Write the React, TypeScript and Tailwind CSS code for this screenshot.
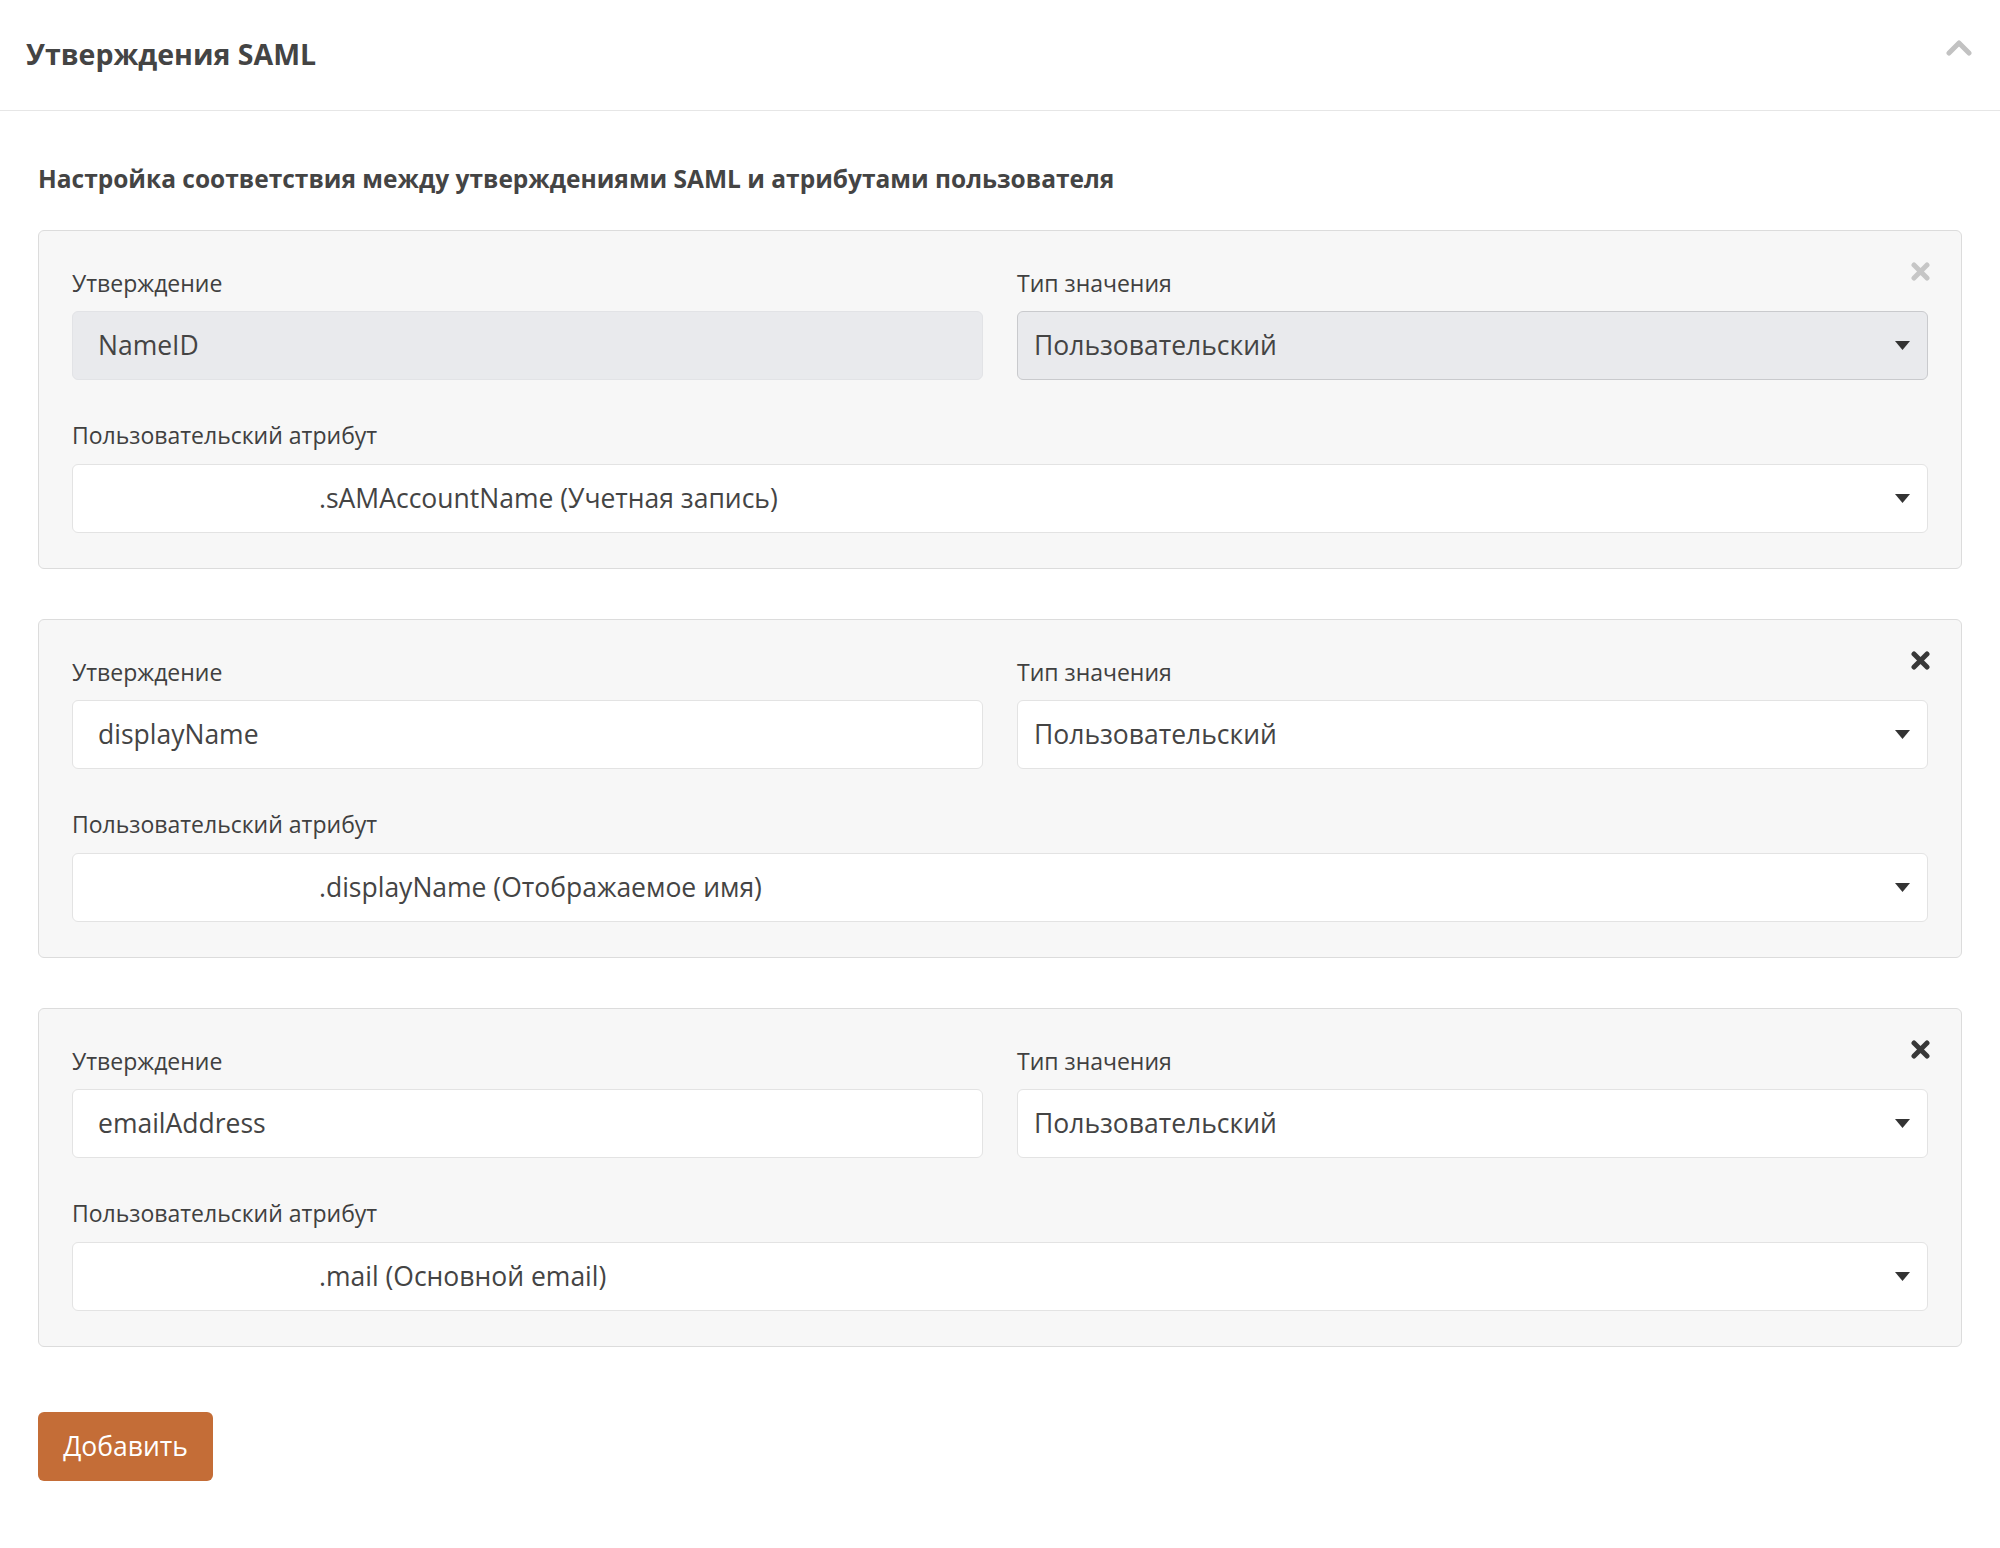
import React from "react";

const font = { fontFamily: '"Open Sans", "Noto Sans", sans-serif' };

function Caret() {
  return (
    <svg width="15" height="9" viewBox="0 0 15 9" className="shrink-0">
      <path d="M0 0 L15 0 L7.5 9 Z" fill="#333333" />
    </svg>
  );
}

function CloseIcon({ disabled }: { disabled: boolean }) {
  return (
    <svg width="19" height="19" viewBox="0 0 19 19">
      <path
        d="M3 3 L16 16 M16 3 L3 16"
        stroke={disabled ? "#c6c6c6" : "#383838"}
        strokeWidth="5"
        strokeLinecap="round"
      />
    </svg>
  );
}

type Row = {
  claim: string;
  attr: string;
  locked: boolean;
};

const rows: Row[] = [
  { claim: "NameID", attr: ".sAMAccountName (Учетная запись)", locked: true },
  { claim: "displayName", attr: ".displayName (Отображаемое имя)", locked: false },
  { claim: "emailAddress", attr: ".mail (Основной email)", locked: false },
];

function ClaimCard({ row }: { row: Row }) {
  return (
    <div className="relative rounded-[6px] border border-[#dcdcdc] bg-[#f7f7f7] px-[33px] pt-[38px] pb-[35px]">
      <div className="absolute right-[31px] top-[31px]">
        <CloseIcon disabled={row.locked} />
      </div>
      <div className="grid grid-cols-2 gap-x-[34px]">
        <div>
          <div className="h-[28px] text-[23px] leading-[28px] text-[#404040]">Утверждение</div>
          <div
            className={
              row.locked
                ? "mt-[14px] flex h-[69px] items-center rounded-[6px] border border-[#e2e3e6] bg-[#e9eaed] pl-[25px] text-[26.5px] text-[#444]"
                : "mt-[14px] flex h-[69px] items-center rounded-[6px] border border-[#e3e3e3] bg-white pl-[25px] text-[26.5px] text-[#444]"
            }
          >
            {row.claim}
          </div>
        </div>
        <div>
          <div className="h-[28px] text-[23px] leading-[28px] text-[#404040]">Тип значения</div>
          <div
            className={
              row.locked
                ? "mt-[14px] flex h-[69px] items-center justify-between rounded-[6px] border border-[#c9cacd] bg-[#e9eaed] pl-[16px] pr-[17px] text-[26.5px] text-[#444]"
                : "mt-[14px] flex h-[69px] items-center justify-between rounded-[6px] border border-[#e3e3e3] bg-white pl-[16px] pr-[17px] text-[26.5px] text-[#444]"
            }
          >
            <span>Пользовательский</span>
            <Caret />
          </div>
        </div>
      </div>
      <div className="mt-[41px] h-[28px] text-[23px] leading-[28px] text-[#404040]">
        Пользовательский атрибут
      </div>
      <div className="mt-[15px] flex h-[69px] items-center justify-between rounded-[6px] border border-[#e3e3e3] bg-white pl-[246px] pr-[17px] text-[26.5px] text-[#444]">
        <span>{row.attr}</span>
        <Caret />
      </div>
    </div>
  );
}

export default function App() {
  return (
    <div className="min-h-screen bg-white" style={font}>
      <div className="flex h-[111px] items-center justify-between border-b border-[#e6e6e6] pl-[26px] pr-[28px]">
        <h2 className="-mt-[2px] text-[28.5px] font-bold text-[#444]">Утверждения SAML</h2>
        <svg width="26" height="17" viewBox="0 0 26 17" className="-mt-[16px]">
          <path
            d="M3 14 L13 4 L23 14"
            stroke="#c2c2c2"
            strokeWidth="5"
            fill="none"
            strokeLinecap="round"
            strokeLinejoin="round"
          />
        </svg>
      </div>
      <div className="px-[38px] pt-[52px]">
        <h3 className="h-[32px] text-[24.5px] font-bold leading-[32px] text-[#444]">
          Настройка соответствия между утверждениями SAML и атрибутами пользователя
        </h3>
        <div className="mt-[35px] flex flex-col gap-[50px]">
          {rows.map((r) => (
            <ClaimCard key={r.claim} row={r} />
          ))}
        </div>
        <button className="mt-[65px] h-[69px] w-[175px] rounded-[6px] bg-[#c46d37] text-[26.5px] text-white">
          Добавить
        </button>
      </div>
    </div>
  );
}
